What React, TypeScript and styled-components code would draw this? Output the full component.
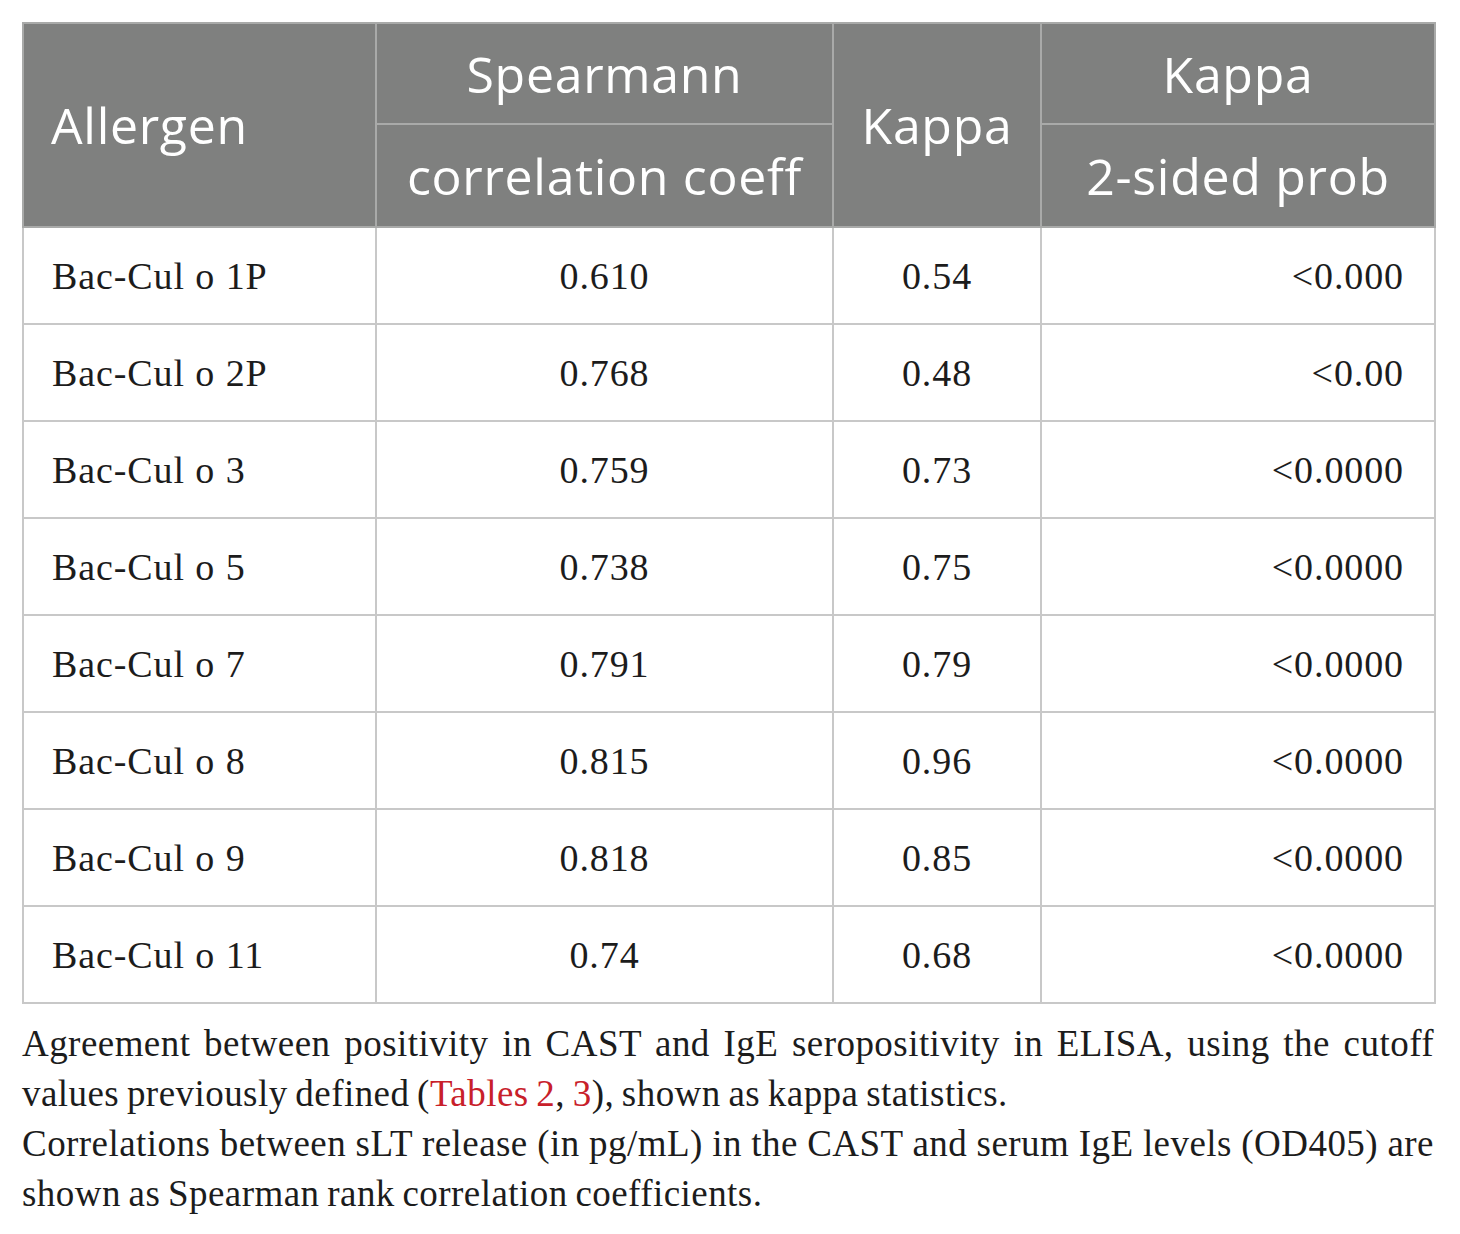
import React from "react";
import styled, { createGlobalStyle } from "styled-components";

const Global = createGlobalStyle`
  html, body { margin: 0; padding: 0; background: #ffffff; }
  body { font-family: "Liberation Serif", "Times New Roman", serif; }
`;

const Page = styled.div`
  padding: 22px 26px 0 22px;
  width: 1412px;
`;

const Table = styled.table`
  width: 1412px;
  border-collapse: collapse;
  table-layout: fixed;
  border: 2px solid #c8c8c8;
`;

const HeadCell = styled.th<{ $align?: string }>`
  background: #7f807f;
  color: #ffffff;
  font-family: "Open Sans", "Noto Sans", sans-serif;
  font-weight: 400;
  font-size: 50px;
  letter-spacing: 0.7px;
  text-align: ${(p) => p.$align || "center"};
  padding: 0;
  padding-left: ${(p) => (p.$align === "left" ? "27px" : "0")};
  border: 2px solid #a9aaa9;
  vertical-align: middle;
  white-space: nowrap;
`;

const TopHead = styled(HeadCell)`
  height: 99px;
`;

const SubHead = styled(HeadCell)`
  height: 101px;
`;

const Cell = styled.td<{ $align?: string }>`
  height: 95px;
  font-size: 38px;
  letter-spacing: 0.9px;
  color: #1c1c1c;
  text-align: ${(p) => p.$align || "center"};
  padding: 0 30px 0 ${(p) => (p.$align === "left" ? "28px" : "30px")};
  border: 2px solid #c8c8c8;
  vertical-align: middle;
`;

const Caption = styled.div`
  margin-top: 15px;
  width: 1412px;
  font-size: 37px;
  letter-spacing: 0.45px;
  word-spacing: -2px;
  line-height: 50px;
  color: #1c1c1c;
`;

const Para = styled.p`
  margin: 0;
  text-align: justify;
`;

const Ref = styled.span`
  color: #c8202a;
`;

const rows = [
  ["Bac-Cul o 1P", "0.610", "0.54", "<0.000"],
  ["Bac-Cul o 2P", "0.768", "0.48", "<0.00"],
  ["Bac-Cul o 3", "0.759", "0.73", "<0.0000"],
  ["Bac-Cul o 5", "0.738", "0.75", "<0.0000"],
  ["Bac-Cul o 7", "0.791", "0.79", "<0.0000"],
  ["Bac-Cul o 8", "0.815", "0.96", "<0.0000"],
  ["Bac-Cul o 9", "0.818", "0.85", "<0.0000"],
  ["Bac-Cul o 11", "0.74", "0.68", "<0.0000"],
];

export default function App() {
  return (
    <Page>
      <Global />
      <Table>
        <colgroup>
          <col style={{ width: 353 }} />
          <col style={{ width: 457 }} />
          <col style={{ width: 208 }} />
          <col style={{ width: 394 }} />
        </colgroup>
        <thead>
          <tr>
            <TopHead rowSpan={2} $align="left">Allergen</TopHead>
            <TopHead>Spearmann</TopHead>
            <TopHead rowSpan={2}>Kappa</TopHead>
            <TopHead>Kappa</TopHead>
          </tr>
          <tr>
            <SubHead>correlation coeff</SubHead>
            <SubHead>2-sided prob</SubHead>
          </tr>
        </thead>
        <tbody>
          {rows.map((r) => (
            <tr key={r[0]}>
              <Cell $align="left">{r[0]}</Cell>
              <Cell>{r[1]}</Cell>
              <Cell>{r[2]}</Cell>
              <Cell $align="right">{r[3]}</Cell>
            </tr>
          ))}
        </tbody>
      </Table>
      <Caption>
        <Para>
          Agreement between positivity in CAST and IgE seropositivity in ELISA, using the cutoff values previously
          defined (<Ref>Tables 2</Ref>, <Ref>3</Ref>), shown as kappa statistics.
        </Para>
        <Para>
          Correlations between sLT release (in pg/mL) in the CAST and serum IgE levels (OD405) are shown as Spearman
          rank correlation coefficients.
        </Para>
      </Caption>
    </Page>
  );
}
